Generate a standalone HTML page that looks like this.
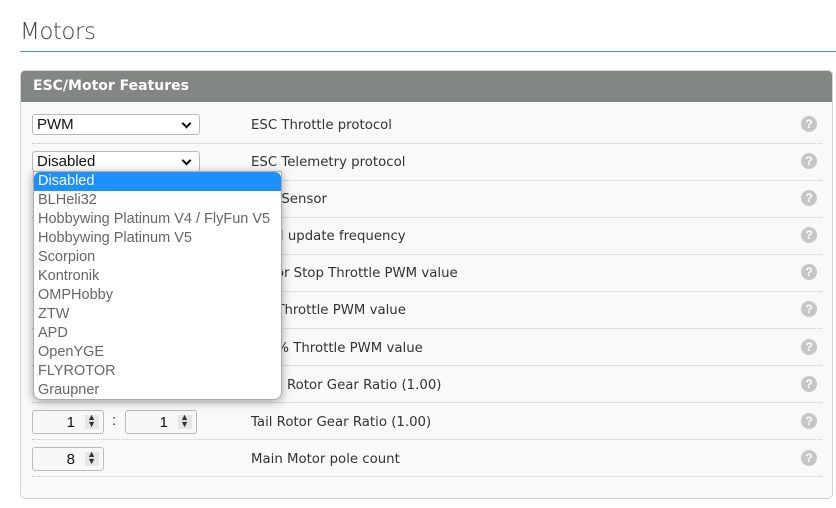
<!DOCTYPE html>
<html><head><style>
*{box-sizing:border-box}
body{margin:0;width:836px;height:508px;background:#fff;font-family:"Liberation Sans",sans-serif;position:relative;overflow:hidden}
.abs{position:absolute}
h1{position:absolute;left:20px;top:19px;margin:0;font-weight:300;font-size:23px;color:#444;font-family:"DejaVu Sans","Liberation Sans",sans-serif;letter-spacing:-0.5px}
.hr{left:20px;top:51px;width:816px;height:0;border-top:1px solid #2fa3dc}
.panel{left:20px;top:70px;width:813px;height:429px;border:1px solid #d4d4d4;border-radius:5px;background:#f9f9f9;overflow:hidden}
.ph{left:0;top:0;right:0;height:31px;background:#828784;color:#fff;font-weight:bold;font-size:14px;padding:7px 0 0 12px;font-family:"DejaVu Sans",sans-serif}
.sep{left:32px;width:790px;height:0;border-top:1px dotted #c8c8c8}
.lbl{left:251px;color:#333;font-family:"DejaVu Sans",sans-serif;font-size:13.3px}
.q{left:801px;width:16px;height:16px;border-radius:50%;background:#c6c6c6;color:#fff;font-weight:bold;font-size:12px;text-align:center;line-height:16px}
.sel{left:32px;width:168px;height:21px;border:1px solid #b9b9b9;border-radius:3px;background:#fff;font-size:15px;color:#111;padding:1px 0 0 4px}
.sel:after{content:"";position:absolute;right:9px;top:5px;width:5px;height:5px;border-right:2px solid #111;border-bottom:2px solid #111;transform:rotate(45deg)}
.num{width:72px;height:24px;border:1px solid #bcbcbc;border-radius:3px;background:#f8f8f8;font-size:15px;text-align:right;padding:3px 28px 0 0;color:#111}
.num:after{content:"";position:absolute;right:4px;top:4px;width:14px;height:14px;background:#e6e6e6}
.num i{position:absolute;right:7px;top:3px;font-style:normal;font-size:9px;line-height:7px;color:#333;z-index:1}
.dd{left:33px;top:171px;width:249px;height:229px;background:#fff;border:1px solid #aaa;border-radius:0 0 8px 8px;box-shadow:0 2px 10px rgba(0,0,0,.35);overflow:hidden}
.dd div{height:19px;font-size:14.5px;color:#666;padding:1px 0 0 4px;line-height:17px}
.dd .on{background:#1e8fff;color:#fff;border-radius:6px 6px 0 0}
</style></head><body>
<h1>Motors</h1>
<div class="abs hr"></div>
<div class="abs panel"><div class="abs ph">ESC/Motor Features</div></div>

<div class="abs sep" style="top:143px"></div>
<div class="abs sep" style="top:180px"></div>
<div class="abs sep" style="top:217px"></div>
<div class="abs sep" style="top:254px"></div>
<div class="abs sep" style="top:291px"></div>
<div class="abs sep" style="top:328px"></div>
<div class="abs sep" style="top:365px"></div>
<div class="abs sep" style="top:402px"></div>
<div class="abs sep" style="top:439px"></div>
<div class="abs sep" style="top:476px"></div>

<div class="abs lbl" style="top:118px">ESC Throttle protocol</div>
<div class="abs lbl" style="top:155px">ESC Telemetry protocol</div>
<div class="abs lbl" style="top:192px">ESC Sensor</div>
<div class="abs lbl" style="top:229px">PWM update frequency</div>
<div class="abs lbl" style="top:266px">Motor Stop Throttle PWM value</div>
<div class="abs lbl" style="top:303px">0% Throttle PWM value</div>
<div class="abs lbl" style="top:341px">100% Throttle PWM value</div>
<div class="abs lbl" style="top:378px">Main Rotor Gear Ratio (1.00)</div>
<div class="abs lbl" style="top:415px">Tail Rotor Gear Ratio (1.00)</div>
<div class="abs lbl" style="top:452px">Main Motor pole count</div>

<div class="abs q" style="top:116px">?</div>
<div class="abs q" style="top:153px">?</div>
<div class="abs q" style="top:190px">?</div>
<div class="abs q" style="top:227px">?</div>
<div class="abs q" style="top:264px">?</div>
<div class="abs q" style="top:301px">?</div>
<div class="abs q" style="top:339px">?</div>
<div class="abs q" style="top:376px">?</div>
<div class="abs q" style="top:413px">?</div>
<div class="abs q" style="top:450px">?</div>

<div class="abs sel" style="top:114px">PWM</div>
<div class="abs sel" style="top:151px">Disabled</div>

<div class="abs num" style="left:32px;top:410px">1<i>▲<br>▼</i></div>
<div class="abs" style="left:112px;top:412px;font-size:15px;color:#333">:</div>
<div class="abs num" style="left:125px;top:410px">1<i>▲<br>▼</i></div>
<div class="abs num" style="left:32px;top:447px">8<i>▲<br>▼</i></div>

<div class="abs dd">
<div class="on">Disabled</div><div>BLHeli32</div><div>Hobbywing Platinum V4 / FlyFun V5</div><div>Hobbywing Platinum V5</div><div>Scorpion</div><div>Kontronik</div><div>OMPHobby</div><div>ZTW</div><div>APD</div><div>OpenYGE</div><div>FLYROTOR</div><div>Graupner</div>
</div>
</body></html>
